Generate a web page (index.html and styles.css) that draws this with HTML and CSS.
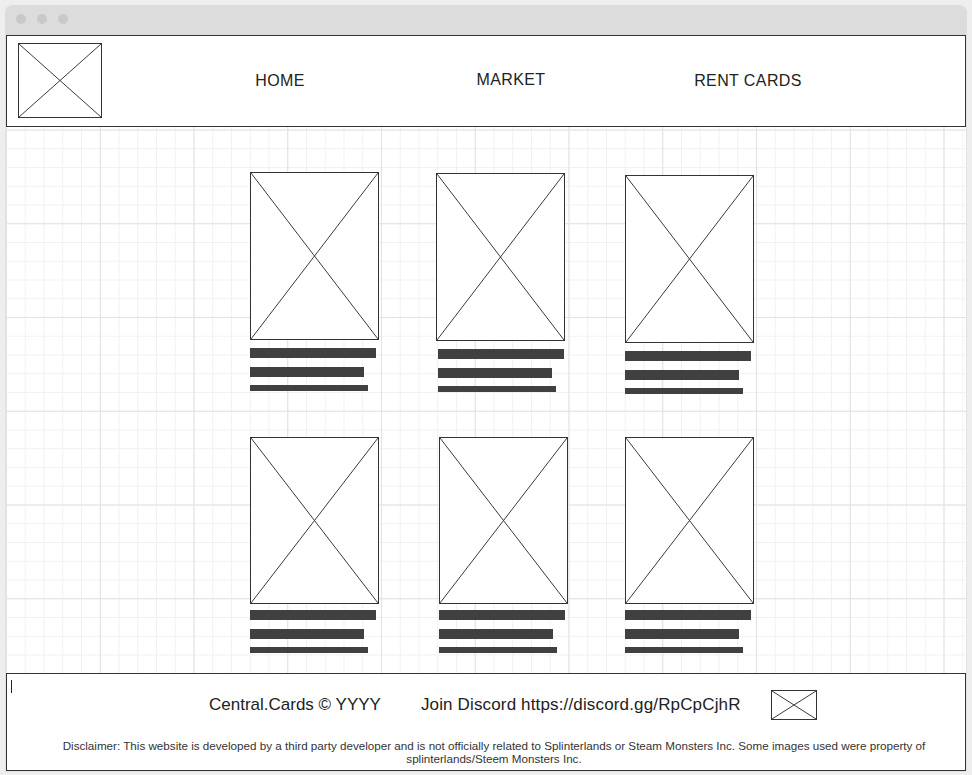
FILE: index.html
```html
<!DOCTYPE html>
<html>
<head>
    <meta charset="utf-8"/>
    <title>Central.Cards</title>
    <link rel="stylesheet" href="styles.css">
</head>
<body>
    <div class="window">
        <div class="titlebar">
            <span class="dot"></span>
            <span class="dot"></span>
            <span class="dot"></span>
        </div>

        <header class="header">
            <div class="placeholder logo">
                <svg viewBox="0 0 100 100" preserveAspectRatio="none"><line x1="0" y1="0" x2="100" y2="100"/><line x1="100" y1="0" x2="0" y2="100"/></svg>
            </div>
            <nav class="nav">
                <a class="nav-item">HOME</a>
                <a class="nav-item nav-item--up">MARKET</a>
                <a class="nav-item">RENT CARDS</a>
            </nav>
        </header>

        <main class="board">
            <div class="cards">
                <div class="card">
                    <div class="placeholder card-img">
                        <svg viewBox="0 0 100 100" preserveAspectRatio="none"><line x1="0" y1="0" x2="100" y2="100"/><line x1="100" y1="0" x2="0" y2="100"/></svg>
                    </div>
                    <div class="bar bar-1"></div>
                    <div class="bar bar-2"></div>
                    <div class="bar bar-3"></div>
                </div>
                <div class="card card--down1 card--inset">
                    <div class="placeholder card-img">
                        <svg viewBox="0 0 100 100" preserveAspectRatio="none"><line x1="0" y1="0" x2="100" y2="100"/><line x1="100" y1="0" x2="0" y2="100"/></svg>
                    </div>
                    <div class="bar bar-1"></div>
                    <div class="bar bar-2"></div>
                    <div class="bar bar-3"></div>
                </div>
                <div class="card card--down3">
                    <div class="placeholder card-img">
                        <svg viewBox="0 0 100 100" preserveAspectRatio="none"><line x1="0" y1="0" x2="100" y2="100"/><line x1="100" y1="0" x2="0" y2="100"/></svg>
                    </div>
                    <div class="bar bar-1"></div>
                    <div class="bar bar-2"></div>
                    <div class="bar bar-3"></div>
                </div>

                <div class="card card--tight">
                    <div class="placeholder card-img">
                        <svg viewBox="0 0 100 100" preserveAspectRatio="none"><line x1="0" y1="0" x2="100" y2="100"/><line x1="100" y1="0" x2="0" y2="100"/></svg>
                    </div>
                    <div class="bar bar-1"></div>
                    <div class="bar bar-2"></div>
                    <div class="bar bar-3"></div>
                </div>
                <div class="card card--tight card--right">
                    <div class="placeholder card-img">
                        <svg viewBox="0 0 100 100" preserveAspectRatio="none"><line x1="0" y1="0" x2="100" y2="100"/><line x1="100" y1="0" x2="0" y2="100"/></svg>
                    </div>
                    <div class="bar bar-1"></div>
                    <div class="bar bar-2"></div>
                    <div class="bar bar-3"></div>
                </div>
                <div class="card card--tight">
                    <div class="placeholder card-img">
                        <svg viewBox="0 0 100 100" preserveAspectRatio="none"><line x1="0" y1="0" x2="100" y2="100"/><line x1="100" y1="0" x2="0" y2="100"/></svg>
                    </div>
                    <div class="bar bar-1"></div>
                    <div class="bar bar-2"></div>
                    <div class="bar bar-3"></div>
                </div>
            </div>
        </main>

        <footer class="footer">
            <span class="caret"></span>
            <div class="footer-row">
                <span class="copy">Central.Cards © YYYY</span>
                <span class="discord">Join Discord https://discord.gg/RpCpCjhR</span>
                <div class="placeholder footer-img">
                    <svg viewBox="0 0 100 100" preserveAspectRatio="none"><line x1="0" y1="0" x2="100" y2="100"/><line x1="100" y1="0" x2="0" y2="100"/></svg>
                </div>
            </div>
            <p class="disclaimer">Disclaimer: This website is developed by a third party developer and is not officially related to Splinterlands or Steam Monsters Inc. Some images used were property of splinterlands/Steem Monsters Inc.</p>
        </footer>
    </div>
</body>
</html>
```

FILE: styles.css
```css
body {
    margin: 0;
    background-color: #eeeeee;
    font-family: "Liberation Sans", Arial, sans-serif;
    color: #222;
}
.window {
    margin: 5px 0 0 5px;
    width: 960px;
    padding: 0 1px 1px 1px;
    background-color: #e2e2e2;
    border-radius: 8px 8px 0 0;
}
.titlebar {
    height: 30px;
    display: flex;
    align-items: center;
    gap: 11px;
    padding-left: 11px;
    padding-bottom: 2px;
    box-sizing: border-box;
    background-color: #dcdcdc;
    border-radius: 8px 8px 0 0;
    margin: 0 -1px;
}
.dot {
    width: 10px;
    height: 10px;
    border-radius: 50%;
    background-color: #c9c9c9;
}

/* wireframe image placeholder */
.placeholder {
    box-sizing: border-box;
    border: 1px solid #333;
    background-color: #fff;
}
.placeholder svg {
    display: block;
    width: 100%;
    height: 100%;
}
.placeholder line {
    stroke: #3a3a3a;
    stroke-width: 1;
    vector-effect: non-scaling-stroke;
}

.header {
    height: 92px;
    box-sizing: border-box;
    border: 1px solid #333;
    background-color: #fff;
    display: flex;
    align-items: flex-start;
    padding: 7px 0 0 11px;
}
.logo {
    width: 84px;
    height: 75px;
}
.nav {
    display: flex;
    margin-left: 61px;
    margin-top: 29px;
}
.nav-item {
    width: 234px;
    text-align: center;
    font-size: 16px;
    letter-spacing: 0.4px;
    color: #222;
}
.nav-item--up {
    margin-top: -1px;
    margin-left: -3px;
    margin-right: 3px;
}

.board {
    height: 546px;
    box-sizing: border-box;
    padding: 45px 0 0 244px;
    background-color: #fff;
    background-image:
        linear-gradient(to right, #e2e2e2 1px, transparent 1px),
        linear-gradient(to bottom, #e2e2e2 1px, transparent 1px),
        linear-gradient(to right, #f1f1f1 1px, transparent 1px),
        linear-gradient(to bottom, #f1f1f1 1px, transparent 1px);
    background-size: 93.75px 93.75px, 93.75px 93.75px, 18.75px 18.75px, 18.75px 18.75px;
    background-position: 0 2.5px;
}
.cards {
    display: grid;
    grid-template-columns: 186px 189px 129px;
    row-gap: 43px;
    align-items: start;
}
.card {
    display: flex;
    flex-direction: column;
    width: 129px;
}
.card--down1 {
    margin-top: 1px;
}
.card--down3 {
    margin-top: 3px;
}
.card--right {
    margin-left: 3px;
}
.card--inset .bar {
    margin-left: 2px;
}
.card-img {
    width: 129px;
    height: 168px;
}
.bar {
    background-color: #404040;
    height: 10px;
    margin-top: 9px;
}
.bar-1 {
    width: 126px;
    margin-top: 8px;
}
.bar-2 {
    width: 114px;
}
.bar-3 {
    width: 118px;
    height: 6px;
    margin-top: 8px;
}
.card--tight .card-img {
    height: 167px;
}
.card--tight .bar-1 {
    margin-top: 6px;
}

.footer {
    position: relative;
    height: 98px;
    box-sizing: border-box;
    border: 1px solid #333;
    background-color: #fff;
    padding-top: 16px;
}
.caret {
    position: absolute;
    left: 4px;
    top: 6px;
    width: 1px;
    height: 13px;
    background-color: #222;
}
.footer-row {
    display: flex;
    align-items: center;
    padding-left: 202px;
    font-size: 17px;
    color: #222;
}
.discord {
    margin-left: 40px;
    letter-spacing: 0.15px;
}
.footer-img {
    width: 46px;
    height: 30px;
    margin-left: 30px;
}
.disclaimer {
    margin: 19px 0 0 0;
    padding: 0 12px 0 28px;
    text-align: center;
    font-size: 11.65px;
    line-height: 13px;
    color: #333;
}
```
